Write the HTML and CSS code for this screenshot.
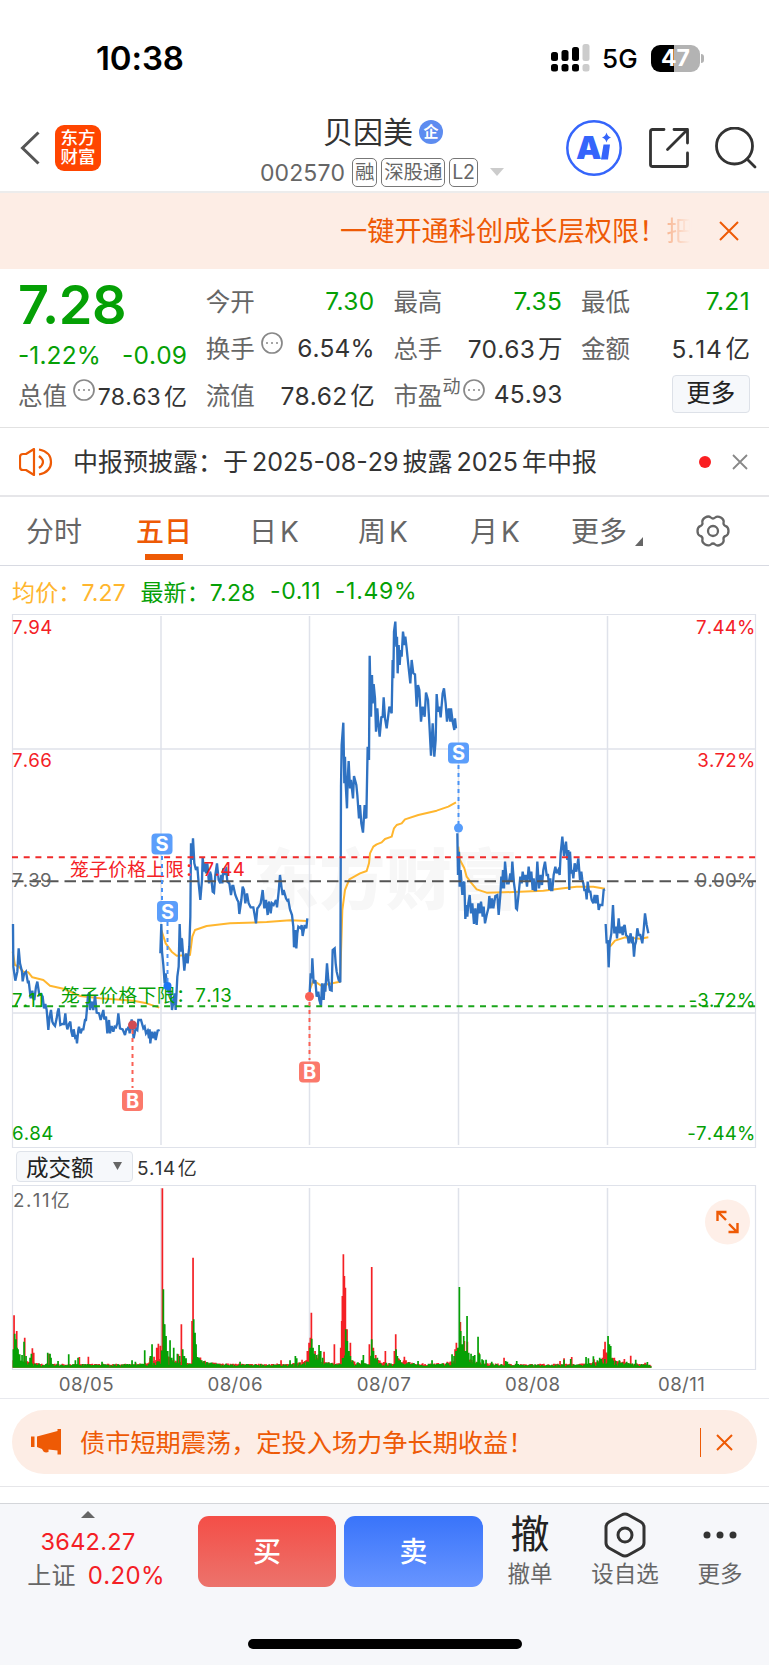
FILE: index.html
```html
<!DOCTYPE html>
<html lang="zh-CN">
<head>
<meta charset="utf-8">
<title>贝因美 002570</title>
<link rel="stylesheet" href="styles.css">
</head>
<body>
<div class="status">
  <span class="clock">10:38</span>
  <div class="status-right">
    <svg class="signal" width="40" height="28" viewBox="0 0 40 28"><g fill="#000"><rect x="0" y="8" width="7" height="9" rx="2.500"/><rect x="10.500" y="6" width="7" height="11" rx="2.500"/><rect x="21" y="3" width="7" height="14" rx="2.500"/><rect x="0" y="20" width="7" height="7.500" rx="2.500"/><rect x="10.500" y="20" width="7" height="7.500" rx="2.500"/><rect x="21" y="20" width="7" height="7.500" rx="2.500"/></g><g fill="#ccc"><rect x="31.500" y="0" width="7" height="17" rx="2.500"/><rect x="31.500" y="20" width="7" height="7.500" rx="2.500"/></g></svg>
    <span class="net">5G</span>
    <span class="battery">47</span><i class="nub"></i>
  </div>
</div>

<header class="header">
  <div class="head-left">
    <svg width="20" height="34" viewBox="0 0 20 34" fill="none" stroke="#555" stroke-width="3"><path d="M18.500 1.500 2.500 17l16 15.500"/></svg>
    <div class="logo">东方<br>财富</div>
  </div>
  <div class="head-mid">
    <div class="title"><span>贝因美</span><span class="ent">企</span></div>
    <div class="sub"><span class="code">002570</span><span class="tag">融</span><span class="tag">深股通</span><span class="tag">L2</span><i class="caret"></i></div>
  </div>
  <div class="head-right">
    <svg width="56" height="56" viewBox="0 0 56 56"><circle cx="28" cy="28" r="26.700" fill="none" stroke="#3565fb" stroke-width="2.500"/><text class="ai" x="10" y="38.500">A</text><path d="M37.500 24.500h6.500l-2 15h-7z" fill="#3565fb"/><path d="M40.500 12.500q1 4 4.500 5-3.500 1-4.500 5-1-4-4.500-5 3.500-1 4.500-5z" fill="#3565fb"/></svg>
    <svg width="40" height="40" viewBox="0 0 40 40" fill="none" stroke="#333" stroke-width="2.800" stroke-linecap="round" stroke-linejoin="round"><path d="M15 1.500H3.500q-2 0-2 2v33q0 2 2 2h33q2 0 2-2V25M25 1.500h13.500v13.500M38 2 18.500 21.500"/></svg>
    <svg width="42" height="42" viewBox="0 0 42 42" fill="none" stroke="#333" stroke-width="2.800" stroke-linecap="round"><circle cx="19.500" cy="19" r="18"/><path d="m32 32 8 8"/></svg>
  </div>
</header>

<div class="promo">
  <span class="promo-text">一键开通科创成长层权限！<span class="fade">把</span></span>
  <svg width="20" height="20" viewBox="0 0 20 20" stroke="#ee5a05" stroke-width="2"><path d="m1 1 18 18M19 1 1 19"/></svg>
</div>

<section class="quote">
  <div class="col c1">
    <div class="price">7.28</div>
    <div class="chg"><span>-1.22%</span><span>-0.09</span></div>
    <div class="cell"><span class="k">总值</span><svg class="more-i" viewBox="0 0 22 22"><circle cx="11" cy="11" r="10"/><path d="M5 11h2m3 0h2m3 0h2"/></svg><b class="sm">78.63<em>亿</em></b></div>
  </div>
  <div class="col">
    <div class="cell"><span class="k">今开</span><b class="g">7.30</b></div>
    <div class="cell"><span class="k">换手</span><svg class="more-i" viewBox="0 0 22 22"><circle cx="11" cy="11" r="10"/><path d="M5 11h2m3 0h2m3 0h2"/></svg><b>6.54%</b></div>
    <div class="cell"><span class="k">流值</span><b>78.62<em>亿</em></b></div>
  </div>
  <div class="col">
    <div class="cell"><span class="k">最高</span><b class="g">7.35</b></div>
    <div class="cell"><span class="k">总手</span><b>70.63<em>万</em></b></div>
    <div class="cell"><span class="k">市盈<sup>动</sup></span><svg class="more-i tight" viewBox="0 0 22 22"><circle cx="11" cy="11" r="10"/><path d="M5 11h2m3 0h2m3 0h2"/></svg><b>45.93</b></div>
  </div>
  <div class="col">
    <div class="cell"><span class="k">最低</span><b class="g">7.21</b></div>
    <div class="cell"><span class="k">金额</span><b class="wide">5.14<em>亿</em></b></div>
    <div class="cell"><span class="more-btn">更多</span></div>
  </div>
</section>

<div class="notice">
  <svg width="34" height="28" viewBox="0 0 34 28" fill="none" stroke="#ee5a05" stroke-width="2.200" stroke-linejoin="round"><path d="M1 9q0-3 3-3h3l8-5v26l-8-5H4q-3 0-3-3zM20 8q8 6 0 12M20 1.500q12 2.500 12 12.500T20 26.500"/></svg>
  <span class="notice-text">中报预披露：于<i></i>2025-08-29<i></i>披露<i></i>2025<i></i>年中报</span>
  <i class="dot"></i>
  <svg width="16" height="16" viewBox="0 0 16 16" stroke="#888" stroke-width="1.800"><path d="m1 1 14 14M15 1 1 15"/></svg>
</div>

<nav class="tabs">
  <span class="t1">分时</span><span class="t2 on">五日</span><span class="t3">日<i></i>K</span><span class="t4">周<i></i>K</span><span class="t5">月<i></i>K</span><span class="t6">更多</span>
  <svg class="corner" width="8" height="9" viewBox="0 0 8 9"><path d="M8 0v9H0z" fill="#666"/></svg>
  <svg class="gear" width="34" height="32" viewBox="-17 -16 34 32" fill="none" stroke="#666" stroke-width="2.300"><path d="M2.200-13.500Q4.400-15.400 7.800-13.500T10.600-8.700Q10-5.800 12.800-4.900 15.500-3.900 15.500 0T12.800 4.900Q10 5.800 10.600 8.700 11.100 11.500 7.800 13.500T2.200 13.500Q0 11.500-2.200 13.500-4.400 15.400-7.800 13.500T-10.600 8.700Q-10 5.800-12.800 4.900-15.500 3.900-15.500 0T-12.800-4.900Q-10-5.800-10.600-8.700-11.100-11.500-7.800-13.500T-2.200-13.500Q0-11.500 2.200-13.500z"/><circle r="5"/></svg>
</nav>

<div class="legend"><span class="avg">均价：7.27</span><span>最新：7.28</span><span class="n">-0.11</span><span class="n">-1.49%</span></div>

<svg class="chart" width="769" height="537" viewBox="0 612 769 537">
  <text class="wm" x="253" y="904" textLength="265">东方财富</text>
  <g class="grid"><path d="M12.500 614.500H755.500V1147.500H12.500z"/><path d="M12 749H756M12 1013H756M161 616V1145M309.500 616V1145M458.500 616V1145M607.500 616V1145" stroke-width="1.500"/></g>
  <g class="avgline">
    <g transform="translate(0 820) scale(.33333)">
      <path d="M38 395 45 435 56 440 70 455 85 457 97 472 130 480 150 497 190 506 240 528 300 535 400 542 440 550 478 563"/>
      <path d="M484 330 497 370 515 395 530 407 570 405 577 350 585 330 620 318 690 310 800 306 870 301 922 303"/>
      <path d="M929 510 940 482 950 488 965 498 985 492 1020 485 1023 400 1027 270 1035 210 1048 178 1080 160 1100 153 1107 130 1110 100 1120 80 1130 73 1145 67 1155 57 1175 50 1182 25 1190 15 1205 10 1215-2 1255-15 1310-28 1345-40 1368-53"/>
    </g>
    <g transform="translate(370 820) scale(.33333)">
      <path d="M265 80 270 120 283 145 290 170 305 190 320 208 350 218 400 217 520 212 580 205 620 200 670 200 705 206"/>
      <path d="M720 380 735 362 765 352 810 356 835 352"/>
    </g>
  </g>
  <g class="price-line">
    <g transform="translate(0 820) scale(.33333)">
      <polyline points="39,312 40,440 46,482 52,455 56,385 60,430 66,455 68,484 72,462 78,455 84,490 86,482 92,535 97,512 100,535 103,540 108,500 112,485 118,525 123,522 128,530 132,565 136,552 140,570 145,630 149,590 153,570 157,605 160,612 165,618 170,595 173,575 176,565 181,615 187,612 192,612 196,580 199,612 202,628 207,612 211,605 214,635 218,650 221,628 225,650 228,645 231,670 235,630 237,620 242,640 246,628 250,628 255,600 258,600 261,565 264,525 268,518 270,570 274,552 276,545 280,570 283,545 285,525 290,578 297,580 302,600 306,585 310,570 313,598 318,590 322,640 327,600 330,640 335,618 340,635 344,620 348,622 352,610 355,580 360,625 368,628 375,645 379,628 382,628 386,620 389,640 395,598 401,655 407,625 412,630 415,600 423,600 430,625 434,620 438,640 443,632 447,655 449,628 451,670 455,635 460,655 464,635 467,660 473,632 479,630"/>
      <polyline points="481,400 484,312 486,395 490,435 494,490 497,460 500,485 503,500 506,520 509,500 512,520 516,570 521,540 524,520 527,570 532,470 536,440 539,312 542,395 544,355 546,358 549,400 553,452 558,400 563,430 565,405 568,380 571,290 573,70 576,120 579,55 583,130 588,150 592,140 596,190 601,240 606,180 608,112 612,155 615,130 618,160 622,130 627,190 630,155 633,165 638,215 642,218 646,165 651,130 656,180 661,190 664,165 667,190 670,145 674,165 678,140 682,185 688,190 693,225 697,198 700,198 706,225 712,240 715,245 718,282 724,240 728,200 732,210 736,250 741,220 746,250 752,262 760,262 764,285 768,310 772,265 775,262 782,250 788,210 793,265 798,240 803,285 806,250 808,245 812,280 816,250 821,255 828,240 831,262 836,215 840,165 845,205 848,225 851,210 858,235 862,242 865,240 870,268 876,285 880,320 882,382 886,330 889,385 892,340 895,320 902,325 905,315 908,348 914,315 919,325 922,295"/>
      <polyline points="929,520 932,460 935,475 937,415 941,490 946,480 950,530 955,515 958,540 963,557 966,490 971,540 974,490 976,515 981,430 985,480 990,510 995,512 998,390 1004,385 1007,430 1010,455 1016,480 1021,487 1023,-100 1025,-225 1030,-292 1033,-110 1035,-190 1037,-110 1041,-35 1043,-120 1046,-177 1050,-95 1053,-120 1059,-65 1062,-132 1069,-105 1072,-75 1077,-5 1080,-45 1084,10 1089,38 1094,-45 1097,-8 1099,-5 1103,-220 1107,-180 1109,-493 1113,-310 1116,-435 1118,-350 1121,-408 1125,-365 1128,-265 1132,-335 1135,-290 1139,-250 1144,-308 1148,-310 1151,-368 1155,-305 1160,-275 1165,-315 1168,-340 1175,-320 1178,-480 1180,-425 1182,-565 1186,-595 1189,-520 1191,-550 1193,-440 1196,-525 1199,-465 1202,-510 1205,-490 1209,-565 1214,-525 1216,-550 1220,-515 1225,-465 1231,-410 1235,-480 1240,-440 1245,-437 1250,-340 1254,-405 1258,-390 1263,-295 1268,-340 1274,-310 1278,-382 1284,-360 1288,-290 1293,-193 1298,-290 1303,-190 1307,-240 1310,-378 1314,-325 1318,-340 1322,-308 1328,-380 1332,-395 1337,-350 1341,-295 1346,-335 1351,-295 1353,-335 1358,-295 1363,-270 1365,-305 1368,-275"/>
    </g>
    <g transform="translate(370 820) scale(.33333)">
      <polyline points="262,40 264,165 267,95 269,200 272,150 277,225 280,190 283,185 286,297 289,255 292,290 295,250 299,225 303,280 307,250 312,312 316,265 320,315 325,250 329,280 333,245 338,290 341,260 345,310 350,285 355,265 358,228 362,265 366,235 370,265 376,228 382,225 386,285 391,225 394,170 396,205 399,150 402,205 405,125 411,190 416,190 421,160 424,185 427,125 432,190 436,220 438,265 441,268 446,220 451,170 455,190 458,155 462,180 467,165 471,200 476,140 481,185 484,155 488,210 491,175 494,210 498,210 502,125 507,205 512,165 516,195 520,150 525,125 530,165 534,165 538,210 541,175 543,210 547,210 551,165 556,140 560,160 565,150 569,165 572,100 577,50 582,108 588,65 592,120 595,90 598,210 600,95 604,160 607,150 610,175 614,130 619,155 625,115 630,180 634,155 637,180 640,190 643,210 647,210 650,238 653,185 657,215 661,215 665,240 670,250 674,225 678,250 682,225 686,270 690,255 697,255 701,210 705,208"/>
      <polyline points="707,312 710,370 713,360 716,442 719,370 724,340 729,255 733,340 738,320 741,355 746,295 750,340 754,320 758,345 761,320 764,315 768,345 773,350 776,370 782,340 785,370 788,350 792,410 795,375 798,365 802,325 806,345 811,345 817,370 821,330 825,280 830,315 835,340"/>
    </g>
  </g>
  <g fill="none" stroke-width="2"><path d="M12 857.200H756" stroke="#f02a2a" stroke-dasharray="6 5.700"/><path d="M12 881.200H756" stroke="#555" stroke-dasharray="11.500 6"/><path d="M12 1006.200H756" stroke="#1aa51a" stroke-dasharray="6 5.700"/></g>
  <g class="axis">
    <g fill="#f42025"><text x="12" y="634">7.94</text><text x="12" y="767">7.66</text><text class="e" x="755.500" y="634">7.44%</text><text class="e" x="755.500" y="767">3.72%</text><text x="70" y="876" textLength="175">笼子价格上限：7.44</text></g>
    <g fill="#666"><text x="12" y="887">7.39</text><text class="e" x="755.500" y="887">0.00%</text></g>
    <g fill="#05a005"><text x="12" y="1007">7.11</text><text x="12" y="1140">6.84</text><text class="e" x="755.500" y="1007">-3.72%</text><text class="e" x="755.500" y="1140">-7.44%</text><text x="61" y="1001.500" textLength="171">笼子价格下限：7.13</text></g>
  </g>
  <g stroke-width="2" stroke-dasharray="4 4" fill="none"><path d="M162 856V916M167.500 922V984M458.500 765V825" stroke="#4a93f5"/><path d="M132.500 1030V1088M309.500 1002V1060" stroke="#fa6155"/></g>
  <circle cx="132.500" cy="1025" r="4.500" fill="#d14b53"/><circle cx="309.500" cy="996.500" r="4.500" fill="#fa6155"/><circle cx="167.500" cy="986" r="4" fill="#1c75f3"/><circle cx="458.500" cy="828" r="4.500" fill="#559cfb"/>
  <g class="marks"><g fill="#5b9efb"><rect x="151.500" y="833.500" width="21" height="21" rx="4"/><rect x="157" y="901" width="21" height="21" rx="4"/><rect x="448" y="742.500" width="21" height="21" rx="4"/></g><g fill="#fb796b"><rect x="122" y="1090" width="21" height="21" rx="4"/><rect x="299" y="1061.500" width="21" height="21" rx="4"/></g>
  <text x="162" y="851">S</text><text x="167.500" y="918.500">S</text><text x="458.500" y="760">S</text><text x="132.500" y="1107.500">B</text><text x="309.500" y="1079">B</text></g>
</svg>

<div class="voltool"><span class="select">成交额<svg width="9" height="8" viewBox="0 0 9 8"><path d="M0 0h9L4.500 8z" fill="#666"/></svg></span><span class="volv">5.14<em>亿</em></span></div>

<svg class="chart" width="769" height="187" viewBox="0 1184 769 187">
  <g class="grid"><path d="M12.500 1185.500H755.500V1369.500H12.500z"/><path d="M161 1188V1368M309.500 1188V1368M458.500 1188V1368M607.500 1188V1368" stroke-width="1.500"/></g>
  <path id="vol-red" fill="#f42025"/><path id="vol-green" fill="#05a005"/>
  <g class="axis" fill="#666"><text x="13" y="1207" textLength="57">2.11亿</text></g>
  <circle cx="727.500" cy="1222" r="22.500" fill="#feefe8"/><path d="M717.500 1221v-9h9M718 1212l8 8M737.500 1223v9h-9M737 1232l-8-8" fill="none" stroke="#ee5a05" stroke-width="2.400"/>
</svg>
<div class="dates"><span>08/05</span><span>08/06</span><span>08/07</span><span>08/08</span><span>08/11</span></div>

<div class="ad-wrap"><div class="ad">
  <svg width="31" height="26" viewBox="0 0 31 26" fill="#ee5a05"><path d="M0 7.500h3.500v10.500H0zM6 7.500 26.500 2V0H30v25.500h-3.500V21.500l-9-1v2.500q-3 1-5-.5l-1.500-2.500L6 18z"/></svg>
  <span class="ad-text">债市短期震荡，定投入场力争长期收益！</span><i class="sep"></i>
  <svg width="17" height="17" viewBox="0 0 17 17" stroke="#ee5a05" stroke-width="2"><path d="m1 1 15 15M16 1 1 16"/></svg>
</div></div>
<div class="gap"></div>

<footer class="bottom">
  <div class="index"><svg width="14" height="7" viewBox="0 0 14 7"><path d="M7 0l7 7H0z" fill="#666"/></svg><div class="idx">3642.27</div><div class="idx2"><span>上证</span>0.20%</div></div>
  <div class="btn buy">买</div><div class="btn sell">卖</div>
  <div class="act a1"><div class="big">撤</div><span>撤单</span></div>
  <div class="act a2"><div class="big"><svg width="42" height="46" viewBox="0 0 42 46" fill="none" stroke="#333" stroke-width="3"><path d="M17.500 3q3.500-2 7 0L37 10q3 2 3 5v16q0 3-3 5l-12.500 7q-3.500 2-7 0L5 36q-3-2-3-5V15q0-3 3-5z"/><circle cx="21" cy="23" r="7"/></svg></div><span>设自选</span></div>
  <div class="act a3"><div class="big"><svg width="34" height="8" viewBox="0 0 34 8" fill="#333"><circle cx="4" cy="4" r="3.500"/><circle cx="17" cy="4" r="3.500"/><circle cx="30" cy="4" r="3.500"/></svg></div><span>更多</span></div>
</footer>
<div class="home"><i></i></div>
<script src="script.js"></script>
</body>
</html>
```
FILE: styles.css
```css
* { box-sizing: border-box; }
body { margin: 0; width: 769px; height: 1665px; overflow: hidden; background: #fff; color: #333; font-family: Inter, "Noto Sans CJK SC", sans-serif; font-kerning: none; }
svg { display: block; flex: none; }
i, em { font-style: normal; }

.status { height: 115px; display: flex; justify-content: space-between; padding: 0 65px 0 96px; }
.clock { font-size: 33px; font-weight: 600; line-height: 40px; padding-top: 38px; color: #000; letter-spacing: -.1px; }
.status-right { display: flex; align-items: center; height: 28px; margin-top: 44px; color: #000; }
.net { font-size: 26px; font-weight: 450; line-height: 28px; margin-left: 11px; margin-top: 1px; width: 37px; letter-spacing: .2px; }
.battery { width: 49px; height: 27px; margin-left: 12px; border-radius: 9px; background: linear-gradient(90deg, #000 47%, #b3b3b3 47%); color: #fff; font-size: 23px; font-weight: 700; line-height: 27px; text-align: center; }
.nub { width: 3px; height: 9px; margin-left: 1px; border-radius: 0 3px 3px 0; background: #b3b3b3; }

.header { height: 78px; display: grid; grid-template-columns: 260px 1fr 203px; border-bottom: 2px solid #ececec; }
.head-left { display: flex; align-items: center; height: 66px; padding-left: 20px; gap: 15px; }
.logo { width: 46px; height: 46px; border-radius: 9px; background: #ff4500; color: #fff; font-size: 17.500px; font-weight: 500; line-height: 19px; padding-top: 3px; text-align: center; }
.title { display: flex; align-items: center; height: 38px; margin-top: -2px; padding-left: 63px; font-size: 30px; gap: 6px; }
.title span:first-child { margin-top: -5px; }
.ent { width: 24px; height: 24px; border-radius: 50%; background: #5d8cf0; color: #fff; font-size: 15px; font-weight: 700; line-height: 23px; text-align: center; }
.sub { display: flex; align-items: center; height: 30px; margin-top: 6px; color: #666; }
.code { font-size: 23px; width: 92px; letter-spacing: .1px; padding-top: 1px; }
.tag { height: 29px; border: 1.500px solid #777; border-radius: 5px; padding: 0 2px; margin-right: 4px; font-size: 19.500px; line-height: 26px; letter-spacing: -.2px; }
.caret { margin-left: 8px; border: 7px solid transparent; border-bottom: 0; border-top: 8px solid #ccc; }
.head-right { display: flex; align-items: center; height: 66px; gap: 26.500px; }

.promo { height: 76px; display: flex; align-items: center; justify-content: space-between; padding: 0 30px 0 340px; background: #fdede5; color: #ee5a05; }
.promo-text { font-size: 27.200px; width: 352px; overflow: hidden; white-space: nowrap; margin-top: -4px; }
.fade { background: linear-gradient(90deg, #f8b48f, #fdede5 90%); -webkit-background-clip: text; color: transparent; }

.quote { height: 159px; display: grid; grid-template-columns: repeat(4, 169px); column-gap: 18.700px; padding: 9px 0 0 18px; border-bottom: 1.500px solid #e2e2e2; }
.cell { display: flex; align-items: center; height: 46.700px; font-size: 24.500px; white-space: nowrap; }
.k { color: #666; display: flex; margin-top: -1px; }
.cell b { font-weight: 400; margin-left: auto; color: #333; letter-spacing: .1px; margin-top: -1px; }
.cell b.sm { font-size: 23px; letter-spacing: .2px; }
.cell b.wide { letter-spacing: .8px; }
.cell em { margin-left: 3px; letter-spacing: 0; }
.cell b.g, .price, .chg { color: #05a005; }
.price, .cell b.g, .legend { font-kerning: normal; }
.cell b.g { letter-spacing: .4px; }
.price { height: 60px; margin-top: -3px; font-size: 54px; font-weight: 600; line-height: 60px; letter-spacing: -.4px; }
.chg { display: flex; justify-content: space-between; height: 37px; font-size: 24.500px; line-height: 41px; letter-spacing: .1px; }
.more-i { width: 22px; height: 22px; margin: -10px 0 0 6px; fill: none; stroke: #888; stroke-width: 1.700; }
.tight { margin-left: 3px; }
sup { font-size: 18px; line-height: 20px; margin-top: 0; }
.more-btn { width: 80px; height: 38px; margin-left: 90.500px; margin-top: -2px; border: 1.500px solid #dde1e8; border-radius: 4px; background: #f6f8fb; color: #222; line-height: 34px; text-align: center; }

.notice { height: 69px; display: flex; align-items: center; padding: 0 21px 0 19px; border-bottom: 2px solid #e6e6e9; }
.notice-text { margin-left: 20px; margin-top: -3px; font-size: 25px; flex: 1; white-space: nowrap; }
.notice-text i { display: inline-block; width: 4px; }
.dot { width: 12px; height: 12px; border-radius: 50%; background: #fa1f22; margin-right: 21px; }

.tabs { height: 69px; display: flex; align-items: center; border-bottom: 1.500px solid #d8dae2; font-size: 28px; color: #666; padding-left: 26px; white-space: nowrap; }
.tabs span { height: 68px; line-height: 70px; flex: none; }
.tabs i { display: inline-block; width: 3px; }
.t1 { width: 110px; } .t2 { width: 113px; } .t3 { width: 109px; } .t4 { width: 112px; } .t5 { width: 101px; } .t6 { width: 64px; }
.tabs .on { color: #ee5a05; font-weight: 500; background: linear-gradient(#ee5a05, #ee5a05) 9px 57px / 38px 6px no-repeat; }
.corner { margin-top: 21px; }
.gear { margin-left: 53px; }

.legend { height: 46px; display: flex; align-items: center; padding: 3px 0 0 12px; gap: 14.500px; font-size: 23px; color: #05a005; white-space: nowrap; letter-spacing: .15px; }
.legend .n { letter-spacing: .7px; margin-right: -1px; }
.avg { color: #ffb62e; }

.grid { fill: none; stroke: #dfe2ea; stroke-width: 1.200; }
.avgline { fill: none; stroke: #ffb62e; stroke-width: 6; stroke-linejoin: round; }
.price-line { fill: none; stroke: #2f72c2; stroke-width: 7; stroke-linejoin: miter; stroke-miterlimit: 3; }
.axis { font-size: 18.700px; letter-spacing: .2px; }
.e { text-anchor: end; }
.wm { font-size: 66px; font-weight: 900; fill: #f7f7f7; }
.marks text { fill: #fff; font-size: 20px; font-weight: 700; text-anchor: middle; }
.ai { fill: #3565fb; font-size: 32px; font-weight: 900; }

.voltool { height: 35px; display: flex; align-items: center; padding-left: 16px; }
.select { width: 117px; height: 31px; display: flex; align-items: center; justify-content: space-between; padding: 0 10px 2px 9px; border: 1.500px solid #dfe3ea; border-radius: 4px; background: #f6f8fb; color: #222; font-size: 22.500px; }
.volv { margin: -1px 0 0 4px; font-size: 19px; letter-spacing: .4px; }
.volv em { margin-left: 2px; }
.dates { height: 28px; display: grid; grid-template-columns: repeat(5, 148.800px); padding-left: 12px; border-bottom: 1.500px solid #e8e9ee; font-size: 18.700px; line-height: 27px; color: #666; text-align: center; letter-spacing: .4px; }

.ad-wrap { height: 88px; padding: 11px 12px 0; border-bottom: 1.500px solid #e6e6e9; }
.ad { height: 64px; display: flex; align-items: center; padding: 0 24px 0 19px; border-radius: 32px; background: #fdede5; color: #ee5a05; }
.ad-text { flex: 1; margin: -3px 0 0 18px; font-size: 25.200px; white-space: nowrap; }
.sep { width: 1.500px; height: 29px; margin-right: 15px; background: #ee5a05; }
.gap { height: 16px; }

.bottom { height: 112px; display: flex; background: #f6f7fa; border-top: 1.500px solid #d4d6da; padding-top: 12px; }
.bottom > div { flex: none; }
.index { width: 198px; padding: 0 22px 0 0; margin-top: -5px; color: #f42025; font-size: 23.500px; text-align: center; letter-spacing: .3px; }
.index svg { margin: 0 auto; }
.idx { line-height: 30px; margin-top: 9px; }
.idx2 { line-height: 35px; margin-top: 1px; padding-left: 16px; white-space: nowrap; font-size: 24px; }
.idx2 span { color: #666; margin-right: 12px; }
.btn { width: 138px; height: 71px; margin-right: 8px; border-radius: 11px; color: #fff; font-size: 28px; font-weight: 500; line-height: 72px; text-align: center; }
.btn.sell { width: 139px; }
.buy { background: linear-gradient(#f44e47, #ec736c); }
.sell { background: linear-gradient(#3974fa, #6895ff); }
.act { width: 94px; text-align: center; font-size: 22.500px; color: #666; line-height: 29px; margin-left: -8px; }
.act.a2 { margin-left: -2px; width: 100px; } .act.a3 { margin-left: -2px; }
.big { height: 38px; display: flex; align-items: center; justify-content: center; font-size: 39px; font-weight: 400; color: #222; margin-bottom: 5px; }
.a1 .big { padding-bottom: 4px; }
.home { height: 50px; background: #f6f7fa; padding: 24px 0 0 248px; }
.home i { display: block; width: 274px; height: 10px; border-radius: 5px; background: #000; }
```
FILE: script.js
```js
// Volume bars: [x, height] in thirds of a pixel, measured from the base line.
const red = [42,157,50,110,74,90,97,58,101,45,147,42,238,32,265,33,450,30,462,33,470,60,475,72,481,66,487,538,492,130,535,40,544,130,576,140,579,330,583,80,843,22,906,24,922,50,927,75,931,90,934,165,945,50,955,40,972,48,1003,70,1022,60,1025,140,1027,215,1030,340,1033,275,1036,240,1041,115,1051,75,1108,70,1115,302,1120,60,1127,38,1156,50,1183,50,1187,100,1213,33,1218,22,1365,55,1369,75,1381,137,1393,80,1402,78,1437,45,1512,30,1680,20,1692,28,1715,32,1782,25,1807,30,1811,55,1815,78,1820,45,1843,30,1873,26,1892,36,1935,15];
const green = [40,55,44,102,48,85,51,60,54,55,59,40,66,38,72,78,78,35,90,30,94,42,143,45,150,42,153,30,174,20,206,40,226,22,234,30,306,18,396,22,406,18,434,52,451,35,456,70,490,235,494,130,498,95,503,50,510,82,515,30,521,60,532,42,539,35,548,55,553,35,558,28,581,145,585,105,588,70,592,32,597,30,605,22,612,20,720,18,870,22,886,35,890,28,930,60,935,87,939,60,944,42,950,38,957,68,962,50,968,30,1037,115,1042,80,1047,50,1051,35,1085,22,1090,38,1115,85,1120,50,1125,28,1132,30,1188,55,1192,35,1197,20,1254,20,1296,22,1356,40,1362,35,1368,50,1373,60,1378,242,1382,110,1386,70,1391,95,1396,50,1401,155,1406,45,1413,42,1419,35,1424,38,1434,93,1439,40,1446,25,1450,22,1458,24,1475,18,1517,20,1522,18,1550,20,1692,24,1712,26,1758,32,1765,28,1780,34,1792,22,1799,30,1804,26,1824,95,1828,70,1832,65,1836,28,1847,20,1858,22,1880,18,1907,24,1942,17];
const decay = [[38,36],[483,48],[576,45],[928,40],[1026,38],[1110,28],[1186,24],[1374,55],[1820,34]];
const paths = { r: "", g: "" };
const bar = (k, x, h) => { paths[k] += `M${(x / 3 - .8).toFixed(2)} 1367.700v${(-h / 3).toFixed(2)}h1.7v${(h / 3).toFixed(2)}z`; };
let seed = 11;
const rnd = () => (seed = (seed * 16807) % 2147483647) / 2147483647;
for (let x = 40; x < 1952; x += 2.3) {
  let e = 11;
  for (const [s, a] of decay) if (x >= s) e += a * Math.exp(-(x - s) / 26);
  for (const s of [483, 930, 1374, 1815]) if (x < s) e += 18 * Math.exp(-(s - x) / 26);
  bar("r", x, e * (.5 + rnd() * .6));
  bar("g", x + 1, e * (.2 + rnd() * .8));
}
for (let n = 0; n < red.length; n += 2) bar("r", red[n], red[n + 1]);
for (let n = 0; n < green.length; n += 2) bar("g", green[n], green[n + 1]);
document.getElementById("vol-red").setAttribute("d", paths.r);
document.getElementById("vol-green").setAttribute("d", paths.g);
```
